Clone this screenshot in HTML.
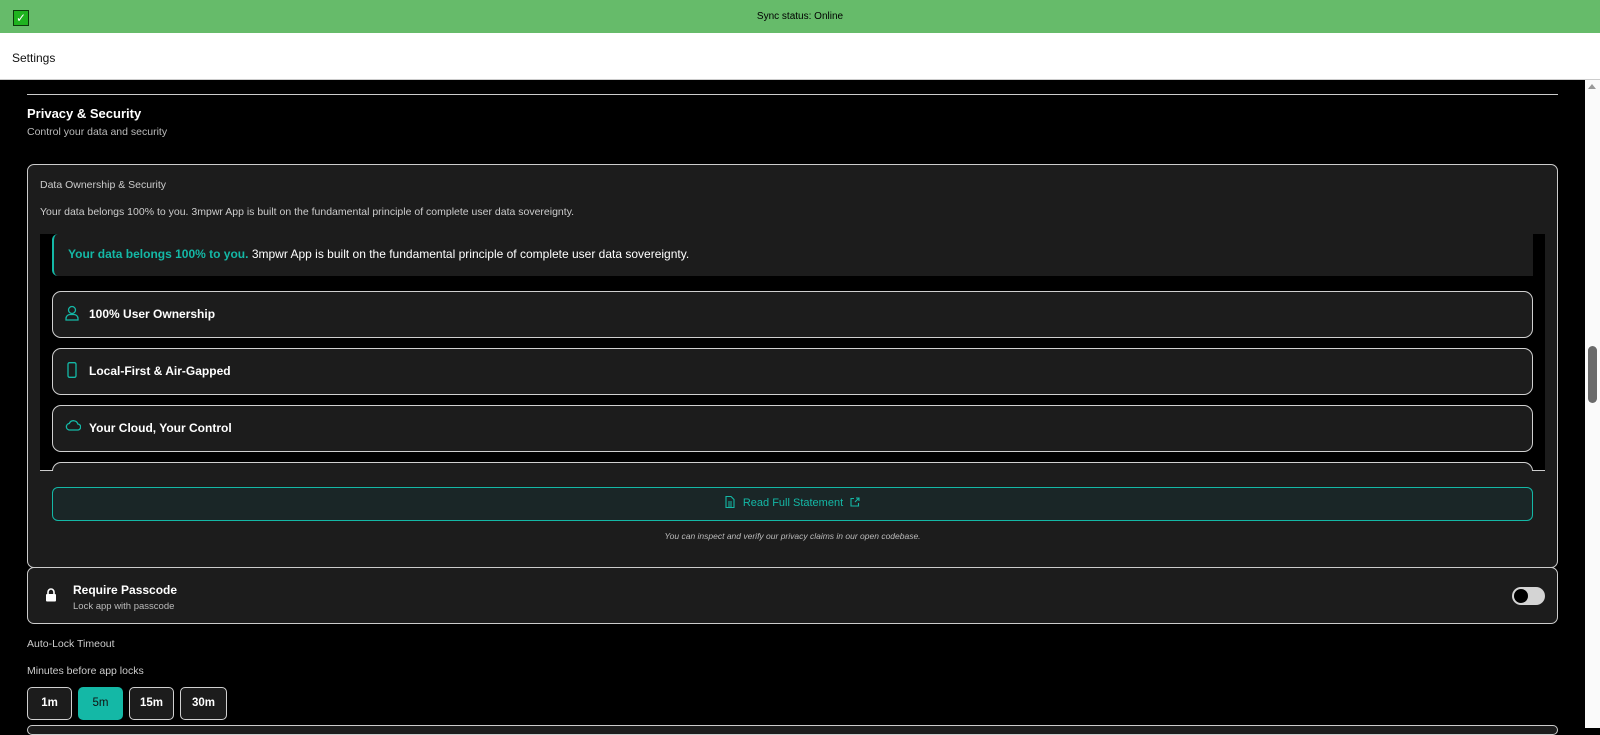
<!DOCTYPE html>
<html><head><meta charset="utf-8"><style>
*{box-sizing:border-box;margin:0;padding:0}
body{width:1600px;height:728px;overflow:hidden;background:#000;font-family:"Liberation Sans",sans-serif;position:relative;color:#fff}
.a{position:absolute}
.item{position:absolute;left:52px;width:1481px;height:47px;border:1.5px solid #d0d0d0;border-radius:9px;background:#1c1c1c;font-size:12px;font-weight:bold;color:#fff;padding-left:36px;line-height:44px}
.item svg{position:absolute;left:12px;top:13px}
.btn{position:absolute;top:687px;height:33px;border:1.5px solid #d0d0d0;border-radius:5px;background:#1c1c1c;color:#fff;font-size:11.5px;font-weight:bold;text-align:center;line-height:30px}
</style></head><body>
<div class="a" style="left:0;top:0;width:1600px;height:33px;background:#66bb6a"></div>
<div class="a" style="left:13px;top:10px;width:16px;height:16px;background:#1fb31f;border:1px solid #0a3a0a;color:#fff;font-size:12px;line-height:14px;text-align:center">✓</div>
<div class="a" style="left:0;top:11px;width:1600px;text-align:center;font-size:10px;color:#000">Sync status: Online</div>
<div class="a" style="left:0;top:33px;width:1600px;height:47px;background:#fff;border-bottom:1px solid #ccc"></div>
<div class="a" style="left:12px;top:51px;font-size:12px;color:#111">Settings</div>
<div class="a" style="left:1585px;top:80px;width:15px;height:648px;background:#fafafa"></div>
<div class="a" style="left:1588px;top:84px;width:0;height:0;border-left:4px solid transparent;border-right:4px solid transparent;border-bottom:5px solid #999"></div>
<div class="a" style="left:1588px;top:346px;width:9px;height:57px;border-radius:5px;background:#6a6a6a"></div>
<div class="a" style="left:27px;top:94px;width:1531px;height:1px;background:#ccc"></div>
<div class="a" style="left:27px;top:106px;font-size:13px;font-weight:bold">Privacy &amp; Security</div>
<div class="a" style="left:27px;top:126px;font-size:10.5px;color:#bbb">Control your data and security</div>
<div class="a" style="left:27px;top:164px;width:1531px;height:404px;border:1.5px solid #ccc;border-radius:7px;background:#1c1c1c"></div>
<div class="a" style="left:40px;top:179px;font-size:10.5px;color:#ccc">Data Ownership &amp; Security</div>
<div class="a" style="left:40px;top:206px;font-size:10.5px;color:#ccc">Your data belongs 100% to you. 3mpwr App is built on the fundamental principle of complete user data sovereignty.</div>
<div class="a" style="left:40px;top:234px;width:1505px;height:237px;background:#000;overflow:hidden;border-bottom:1.5px solid #ccc">
<div class="a" style="left:12px;top:0;width:1481px;height:42px;background:#1c1c1c;border-left:2.5px solid #14b8a6;border-radius:6px 0 0 6px;font-size:12px;line-height:40px;padding-left:14px"><b style="color:#14b8a6">Your data belongs 100% to you.</b> 3mpwr App is built on the fundamental principle of complete user data sovereignty.</div>
</div>
<div class="item" style="top:291px"><svg width="14" height="16" viewBox="0 0 14 16" fill="none" stroke="#14b8a6" stroke-width="1.3"><circle cx="7" cy="5" r="3.5"/><path d="M1 15v-1.5a4 4 0 0 1 4-4h4a4 4 0 0 1 4 4V15z"/></svg>100% User Ownership</div>
<div class="item" style="top:348px"><svg width="14" height="16" viewBox="0 0 14 16" fill="none" stroke="#14b8a6" stroke-width="1.3"><rect x="3" y="0.7" width="8" height="14.6" rx="1.5"/></svg>Local-First &amp; Air-Gapped</div>
<div class="item" style="top:405px"><svg width="16" height="12" viewBox="0 0 16 12" fill="none" stroke="#14b8a6" stroke-width="1.3"><path d="M4 11h8.5a3 3 0 0 0 .3-6A4.5 4.5 0 0 0 4.3 4.5 3.3 3.3 0 0 0 4 11z"/></svg>Your Cloud, Your Control</div>
<div class="item" style="top:462px;height:9px;border-bottom:none;border-radius:9px 9px 0 0"></div>
<div class="a" style="left:52px;top:487px;width:1481px;height:34px;border:1.5px solid #14b8a6;border-radius:6px;background:#1a2627;text-align:center;color:#14b8a6;font-size:11px;line-height:31px"><svg width="10" height="12" viewBox="0 0 10 12" fill="none" stroke="#14b8a6" stroke-width="1.1" style="vertical-align:-2px;margin-right:8px"><path d="M1 .5h5l3 3v8H1z M3 6h4M3 8h4M3 10h4"/></svg>Read Full Statement<svg width="10" height="10" viewBox="0 0 10 10" fill="none" stroke="#14b8a6" stroke-width="1.1" style="vertical-align:-1px;margin-left:7px"><path d="M4 1.5H1v7.5h7.5V6M5 5l4-4M6 1h3v3"/></svg></div>
<div class="a" style="left:27px;top:531px;width:1531px;text-align:center;font-size:8.5px;font-style:italic;color:#bbb">You can inspect and verify our privacy claims in our open codebase.</div>
<div class="a" style="left:27px;top:567px;width:1531px;height:57px;border:1.5px solid #ccc;border-radius:7px;background:#1c1c1c"></div>
<svg class="a" style="left:45px;top:587px" width="12" height="15" viewBox="0 0 12 15"><path d="M3 7V5a3 3 0 0 1 6 0v2" fill="none" stroke="#fff" stroke-width="1.6"/><rect x="1" y="7" width="10" height="7.5" rx="1" fill="#fff"/></svg>
<div class="a" style="left:73px;top:583px;font-size:12px;font-weight:bold">Require Passcode</div>
<div class="a" style="left:73px;top:601px;font-size:9.5px;color:#bbb">Lock app with passcode</div>
<div class="a" style="left:1512px;top:587px;width:33px;height:18px;border-radius:9px;background:#d4d4d4"></div>
<div class="a" style="left:1514px;top:589px;width:14px;height:14px;border-radius:7px;background:#000"></div>
<div class="a" style="left:27px;top:638px;font-size:10.5px;color:#ccc">Auto-Lock Timeout</div>
<div class="a" style="left:27px;top:665px;font-size:10.5px;color:#ccc">Minutes before app locks</div>
<div class="btn" style="left:27px;width:45px">1m</div>
<div class="btn" style="left:78px;width:45px;background:#14b8a6;border-color:#14b8a6;color:#111;font-weight:normal">5m</div>
<div class="btn" style="left:129px;width:45px">15m</div>
<div class="btn" style="left:180px;width:47px">30m</div>
<div class="a" style="left:27px;top:725px;width:1531px;height:10px;border:1.5px solid #ccc;border-radius:7px;background:#1c1c1c"></div>
</body></html>
